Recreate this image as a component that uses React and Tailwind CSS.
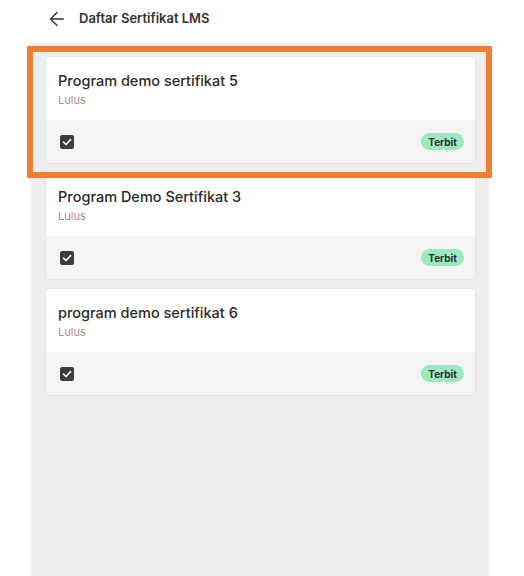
import React from "react";
import { ArrowLeft } from "lucide-react";

const items = [
  "Program demo sertifikat 5",
  "Program Demo Sertifikat 3",
  "program demo sertifikat 6",
];

function Card({ title }) {
  return (
    <div className="rounded-[4px] border border-[#e3e3e3] bg-white overflow-hidden">
      <div className="h-[63px] pl-[12px] pt-[14px]">
        <div className="text-[14.5px] leading-[20px] font-medium text-[#2b2b2b]">{title}</div>
        <div className="text-[11px] leading-[16px] text-[#a58d82] mt-[1px]">Lulus</div>
      </div>
      <div className="h-[43px] bg-[#f4f4f4] flex items-center justify-between pl-[14px] pr-[11px]">
        <div className="w-[14px] h-[14px] rounded-[2px] bg-[#3c3c3c] flex items-center justify-center">
          <svg width="10" height="10" viewBox="0 0 10 10" fill="none">
            <path d="M1.5 5.2 L4 7.5 L8.6 2.6" stroke="white" strokeWidth="1.6" strokeLinecap="round" strokeLinejoin="round" />
          </svg>
        </div>
        <div className="h-[17px] px-[7px] rounded-full bg-[#9de8bf] text-[10px] font-bold text-[#2f2f2f] flex items-center leading-none">
          Terbit
        </div>
      </div>
    </div>
  );
}

export default function App() {
  return (
    <div className="relative w-[524px] h-[576px] bg-white overflow-hidden" style={{ fontFamily: "Inter, 'Noto Sans', sans-serif" }}>
      <div className="h-[38px] mb-[5px] flex items-center pl-[46px]">
        <ArrowLeft size={22} strokeWidth={1.6} className="text-[#333]" />
        <div className="ml-[11px] text-[13px] font-semibold text-[#333]">Daftar Sertifikat LMS</div>
      </div>
      <div className="ml-[31px] w-[458px] h-[533px] bg-[#eeeeee] pt-[13px] pl-[14px] pr-[13px] flex flex-col gap-[8px]">
        {items.map((t) => (
          <Card key={t} title={t} />
        ))}
      </div>
      <div className="absolute left-[27px] top-[46px] w-[465px] h-[132px] border-[6px] border-[#ee7e32] pointer-events-none" />
    </div>
  );
}
